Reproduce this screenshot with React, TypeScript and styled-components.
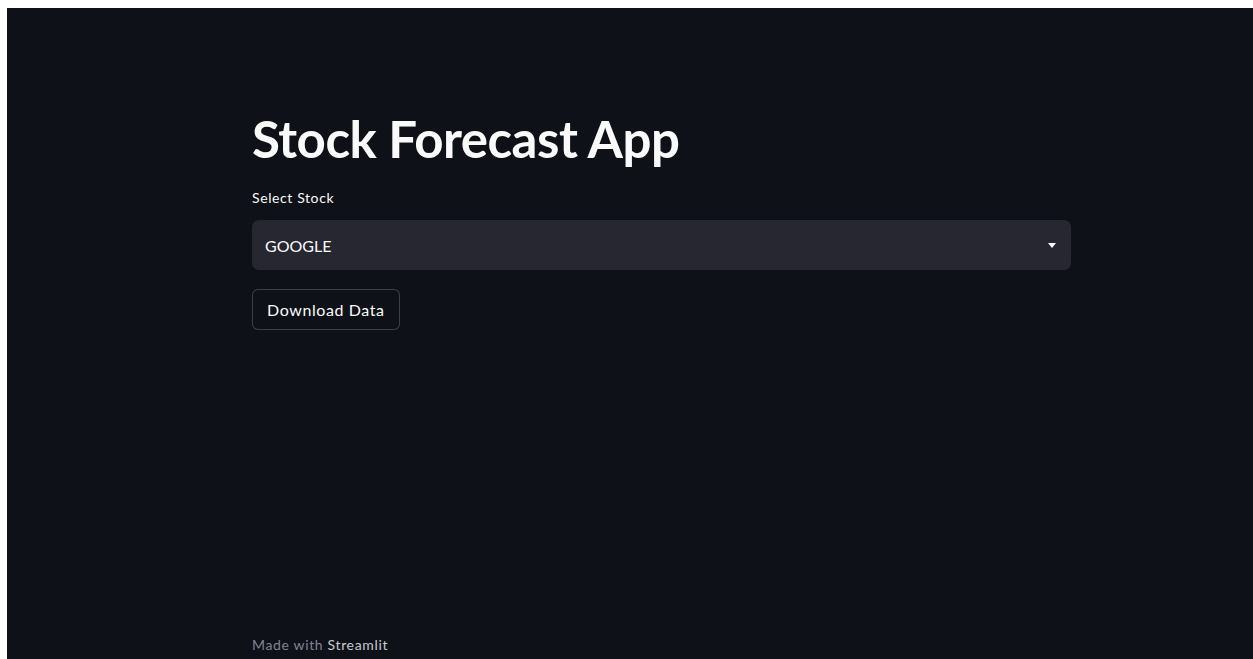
import React from "react";
import styled, { createGlobalStyle } from "styled-components";

const Global = createGlobalStyle`
  html, body {
    margin: 0;
    padding: 0;
    background: #ffffff;
    overflow: hidden;
  }
  body {
    padding: 8px 0 0 7px;
  }
`;

const Page = styled.div`
  width: calc(100vw - 7px);
  height: calc(100vh - 8px);
  background: #0e1117;
  color: #fafafa;
  font-family: Lato, "Noto Sans", sans-serif;
  display: flex;
  flex-direction: column;
  box-sizing: border-box;
`;

const Main = styled.main`
  flex: 1;
  width: 819px;
  margin-left: 245px;
  padding-top: 97px;
  display: flex;
  flex-direction: column;
`;

const Title = styled.h1`
  margin: 0;
  font-size: 51px;
  font-weight: 700;
  line-height: 68px;
  letter-spacing: -0.5px;
  color: #fafafa;
`;

const Label = styled.label`
  margin-top: 15px;
  font-size: 14px;
  line-height: 20px;
  letter-spacing: 0.6px;
  color: #fafafa;
`;

const Select = styled.div`
  margin-top: 12px;
  height: 50px;
  border-radius: 7px;
  background: #262730;
  display: flex;
  align-items: center;
  justify-content: space-between;
  padding: 0 15px 0 13px;
  font-size: 16px;
  color: #fafafa;
`;

const Caret = styled.svg`
  width: 8px;
  height: 5px;
  fill: #fafafa;
`;

const Button = styled.button`
  margin-top: 19px;
  align-self: flex-start;
  height: 41px;
  padding: 0 14px;
  border: 1px solid rgba(250, 250, 250, 0.2);
  border-radius: 6px;
  background: #0e1117;
  color: #fafafa;
  font-family: inherit;
  font-size: 16px;
  letter-spacing: 0.6px;
`;

const Footer = styled.footer`
  margin-left: 245px;
  padding-bottom: 6px;
  font-size: 14px;
  letter-spacing: 0.65px;
  color: #808495;
`;

const Brand = styled.span`
  color: #c7c9d1;
`;

export default function App() {
  return (
    <>
      <Global />
      <Page>
        <Main>
          <Title>Stock Forecast App</Title>
          <Label>Select Stock</Label>
          <Select>
            <span>GOOGLE</span>
            <Caret viewBox="0 0 8 5">
              <path d="M0 0h8L4 5z" />
            </Caret>
          </Select>
          <Button>Download Data</Button>
        </Main>
        <Footer>
          Made with <Brand>Streamlit</Brand>
        </Footer>
      </Page>
    </>
  );
}
